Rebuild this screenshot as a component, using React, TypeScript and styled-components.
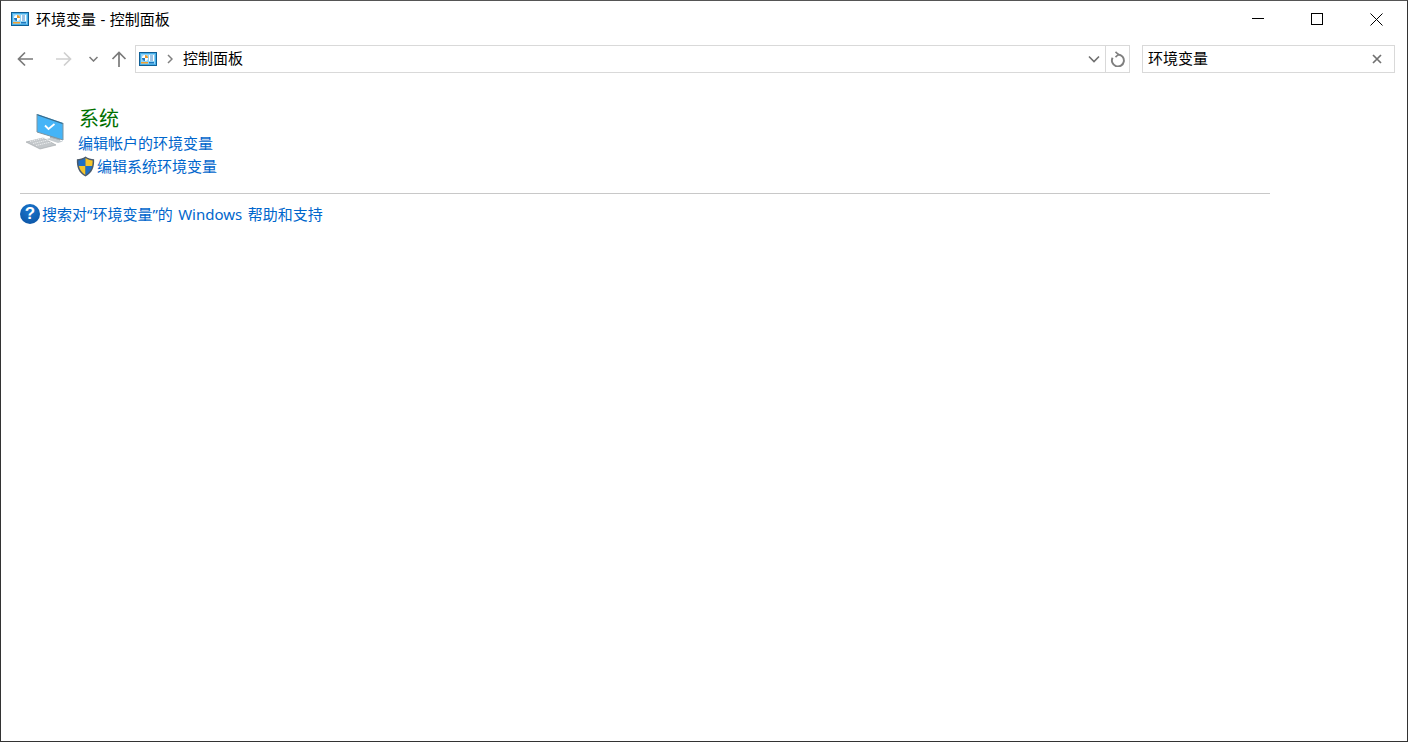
import React from "react";
import styled, { createGlobalStyle } from "styled-components";

const Global = createGlobalStyle`
  html, body { margin: 0; padding: 0; background: #fff; }
  body { font-family: "Noto Sans", "Noto Sans CJK SC", sans-serif; color: #000; }
  * { box-sizing: border-box; }
`;

const Win = styled.div`
  width: 1408px; height: 742px; border: 1px solid #333; border-top-color: #555; background: #fff;
  display: flex; flex-direction: column; overflow: hidden;
`;
const TitleBar = styled.div`
  height: 36px; display: flex; align-items: center; padding-left: 10px; flex: none;
`;
const TitleText = styled.span`
  margin-left: 7px; padding-bottom: 1px; font-size: 15px; line-height: 20px; flex: 1; word-spacing: 0.5px;
`;
const Caption = styled.button`
  width: 59px; height: 36px; border: 0; background: none; padding: 0; display: flex; align-items: center; justify-content: center;
`;
const CaptionGroup = styled.div`
  display: flex; padding-right: 1px;
`;
const CloseCaption = styled(Caption)`
  margin-left: 1px;
`;
const NavBar = styled.div`
  height: 28px; margin-top: 8px; display: flex; align-items: stretch; flex: none; padding-left: 4px;
`;
const NavBtn = styled.div<{ $w: number }>`
  width: ${p => p.$w}px; display: flex; align-items: center; justify-content: center; flex: none;
`;
const Address = styled.div`
  margin-left: 2px; width: 971px; border: 1px solid #d9d9d9; display: flex; align-items: center; padding-left: 3px; padding-right: 5px;
`;
const Crumb = styled.span`
  font-size: 15px; line-height: 20px; padding-bottom: 2px; flex: 1;
`;
const Refresh = styled.div`
  width: 24px; border: 1px solid #d9d9d9; border-left: 0; display: flex; align-items: center; justify-content: center;
`;
const Search = styled.div`
  margin-left: 12px; width: 253px; border: 1px solid #d9d9d9; display: flex; align-items: center; padding: 0 12px 0 5px;
`;
const SearchText = styled.span`
  font-size: 15px; line-height: 20px; padding-bottom: 2px; flex: 1;
`;
const Content = styled.div`
  padding: 30px 0 0 19px; width: 1269px;
`;
const Result = styled.div`
  display: flex; height: 91px; border-bottom: 1px solid #c8c8c8;
`;
const IconCol = styled.div`
  width: 58px; padding: 9px 0 0 5px; flex: none;
`;
const Texts = styled.div`
  display: flex; flex-direction: column;
`;
const Heading = styled.a`
  font-size: 20px; line-height: 24px; color: #007000; margin: 4px 0 0 1px; height: 25px;
`;
const LinkText = styled.a`
  font-size: 15px; line-height: 23px; color: #0066cc; display: flex; align-items: center; white-space: pre;
`;
const ShieldLink = styled(LinkText)`
  margin-left: -2px;
`;
const ShieldBox = styled.span`
  width: 21px; height: 23px; display: flex; align-items: center; flex: none;
`;
const Help = styled.div`
  display: flex; align-items: center; margin-top: 9px; height: 22px;
`;
const HelpText = styled.a`
  margin-left: 2px; font-size: 15px; line-height: 22px; color: #0066cc; white-space: pre; word-spacing: 1.5px;
`;
const HelpCircle = styled.span`
  width: 20px; height: 20px; border-radius: 50%; background: radial-gradient(circle at 50% 30%, #1a78d0, #0a4f9e);
  color: #fff; font: bold 17px/20px "Liberation Sans", sans-serif; text-align: center; flex: none;
`;

const CPanel = () => (
  <svg width="18" height="14" viewBox="0 0 18 14">
    <rect x="0.5" y="0.5" width="17" height="13" fill="#45ade8" stroke="#0f5f96" />
    <rect x="2" y="2" width="14" height="10" fill="#8fd2f5" />
    <circle cx="6" cy="6" r="3" fill="#fff" />
    <path d="M6 6V3a3 3 0 0 1 3 3z" fill="#e89a2c" />
    <path d="M3 6a3 3 0 0 0 3 3V6z" fill="#1c78c0" />
    <rect x="10" y="3" width="5" height="6" fill="#fff" />
    <path d="M11 4h3M11 6h3M11 8h3" stroke="#3a86c8" />
    <rect x="2" y="10" width="7" height="1.5" fill="#f0a030" />
    <rect x="10" y="10" width="5" height="1.5" fill="#1c78c0" />
  </svg>
);

const Computer = () => (
  <svg width="40" height="38" viewBox="0 0 40 38">
    <path d="M25 21l10 3v5l-10-3z" fill="#a9b2b8" />
    <path d="M21 27l5-1 12 3.500-5 1.500z" fill="#c6ccd0" />
    <path d="M12 2L38 11v17L12 20z" fill="#45b4f7" />
    <path d="M12 2L38 11v1.200L12 3.200z" fill="#3a6a88" />
    <path d="M12 2v18l26 8V11" fill="none" stroke="#7d939f" strokeWidth="1" />
    <path d="M20 13.500l3.500 3.500 6-5" fill="none" stroke="#fff" strokeWidth="1.800" />
    <path d="M1 30l17-4 13 7-16 4z" fill="#c3c7ca" stroke="#9da2a6" strokeWidth="0.6" />
    <path d="M5 29.500l15 -3.500M8 31.500l15-3.500M11 33.500l15-3.500" stroke="#eceeef" strokeWidth="0.9" strokeDasharray="1.400 0.600" />
  </svg>
);

const Shield = () => (
  <svg width="19" height="21" viewBox="0 0 18 20">
    <path d="M9 0.500C6.500 2.500 3.500 3 0.800 3c-.4 7 1.500 13 8.200 16.500C15.700 16 17.600 10 17.200 3 14.500 3 11.500 2.500 9 0.500z" fill="#4b5a6a" />
    <path d="M9 2C7 3.500 4.500 4.200 2.200 4.300 2.200 6 2.300 8 2.700 9.500H9z" fill="#1f6fc4" />
    <path d="M9 2c2 1.500 4.500 2.200 6.800 2.300 0 1.700-.1 3.700-.5 5.200H9z" fill="#f6c52a" />
    <path d="M2.700 9.500C3.500 13 5.500 16 9 18V9.500z" fill="#f6c52a" />
    <path d="M15.300 9.500C14.500 13 12.500 16 9 18V9.500z" fill="#1f6fc4" />
  </svg>
);

const ArrowSvg = styled.svg<{ $rot: number }>`
  transform: rotate(${p => p.$rot}deg);
`;

const Arrow = ({ c, rot }: { c: string; rot: number }) => (
  <ArrowSvg $rot={rot} width="16" height="16" viewBox="0 0 16 16">
    <path d="M1 8h15M8 1.500L1.500 8 8 14.500" fill="none" stroke={c} strokeWidth="1.700" />
  </ArrowSvg>
);

const Chevron = () => (
  <svg width="12" height="8" viewBox="0 0 12 8">
    <path d="M1 1.500l5 5 5-5" fill="none" stroke="#707070" strokeWidth="1.600" />
  </svg>
);

export default function App() {
  return (
    <>
      <Global />
      <Win>
        <TitleBar>
          <CPanel />
          <TitleText>环境变量 - 控制面板</TitleText>
          <CaptionGroup>
            <Caption aria-label="min"><svg width="12" height="12"><path d="M0 5.500h12" stroke="#000" /></svg></Caption>
            <Caption aria-label="max"><svg width="12" height="12"><rect x="0.500" y="0.500" width="11" height="11" fill="none" stroke="#000" /></svg></Caption>
            <CloseCaption aria-label="close"><svg width="13" height="13"><path d="M0.500 0.500l12 12M12.500 0.500l-12 12" stroke="#000" /></svg></CloseCaption>
          </CaptionGroup>
        </TitleBar>
        <NavBar>
          <NavBtn $w={40}><Arrow c="#7a7a7a" rot={0} /></NavBtn>
          <NavBtn $w={37}><Arrow c="#cfcfcf" rot={180} /></NavBtn>
          <NavBtn $w={23}><svg width="9" height="6" viewBox="0 0 9 6"><path d="M0.500 1l4 4 4-4" fill="none" stroke="#7a7a7a" strokeWidth="1.500" /></svg></NavBtn>
          <NavBtn $w={28}><Arrow c="#7a7a7a" rot={90} /></NavBtn>
          <Address>
            <CPanel />
            <NavBtn $w={26}><svg width="6" height="10" viewBox="0 0 6 10"><path d="M1 1l4 4-4 4" fill="none" stroke="#808080" strokeWidth="1.500" /></svg></NavBtn>
            <Crumb>控制面板</Crumb>
            <Chevron />
          </Address>
          <Refresh>
            <svg width="16" height="16" viewBox="0 0 16 16">
              <path d="M8 3.500A6 6 0 1 1 2.600 6.700" fill="none" stroke="#7f7f7f" strokeWidth="1.900" />
              <path d="M5.500 0.800L8.400 3.500 5.500 6.200" fill="none" stroke="#7f7f7f" strokeWidth="1.600" />
            </svg>
          </Refresh>
          <Search>
            <SearchText>环境变量</SearchText>
            <svg width="10" height="10" viewBox="0 0 10 10"><path d="M1 1l8 8M9 1l-8 8" stroke="#707070" strokeWidth="1.700" /></svg>
          </Search>
        </NavBar>
        <Content>
          <Result>
            <IconCol><Computer /></IconCol>
            <Texts>
              <Heading>系统</Heading>
              <LinkText>编辑帐户的环境变量</LinkText>
              <ShieldLink><ShieldBox><Shield /></ShieldBox>编辑系统环境变量</ShieldLink>
            </Texts>
          </Result>
          <Help>
            <HelpCircle>?</HelpCircle>
            <HelpText>搜索对“环境变量”的 Windows 帮助和支持</HelpText>
          </Help>
        </Content>
      </Win>
    </>
  );
}
